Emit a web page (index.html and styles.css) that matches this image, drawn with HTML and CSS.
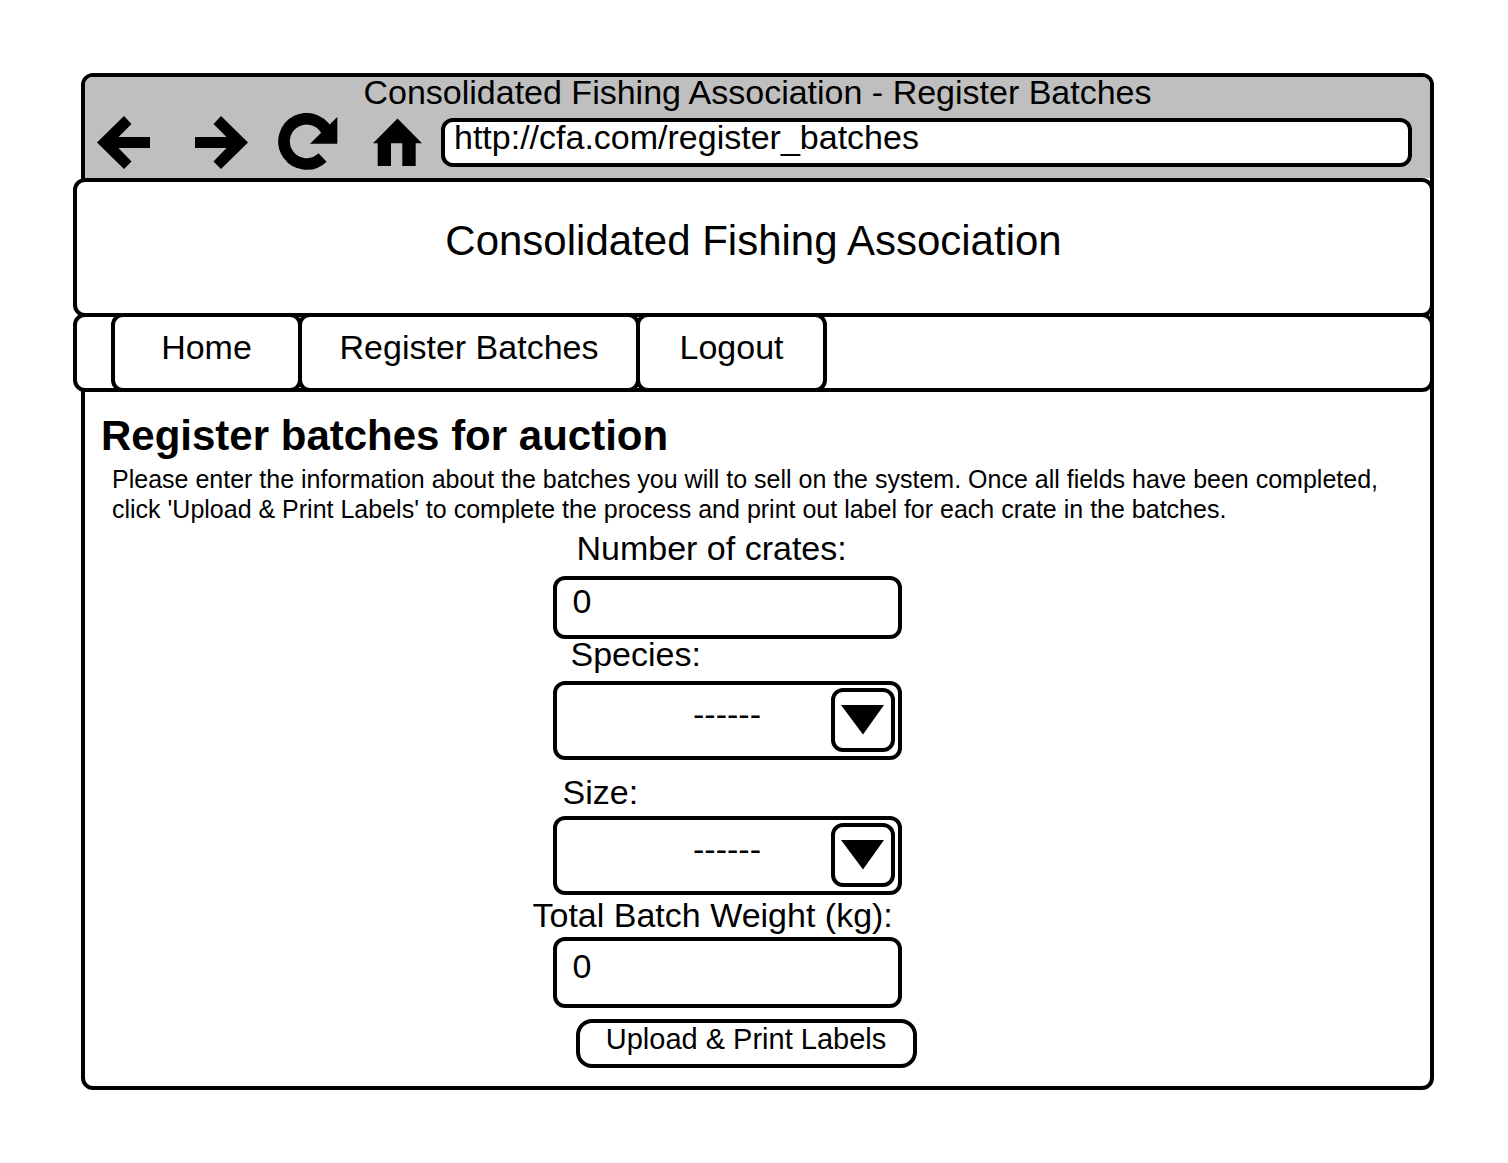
FILE: index.html
```html
<!DOCTYPE html>
<html lang="en">
<head>
<meta charset="utf-8">
<meta name="viewport" content="width=device-width, initial-scale=1">
<title>Consolidated Fishing Association - Register Batches</title>
<link rel="stylesheet" href="styles.css">
</head>
<body>
<div class="window">
  <div class="chrome">
    <div class="chrome-title">Consolidated Fishing Association - Register Batches</div>
    <div class="toolbar">
      <button class="tool tool-back" type="button" aria-label="Back">
        <svg width="53" height="53" viewBox="0 0 53 53"><path d="M0 26.500 27 0l7.500 8L21.500 21H53v11H21.500l13 13.500L27 53z"/></svg>
      </button>
      <button class="tool tool-forward" type="button" aria-label="Forward">
        <svg width="53" height="53" viewBox="0 0 53 53"><path d="M53 26.500 26 0l-7.500 8 13 13H0v11h31.500l-13 13.500L26 53z"/></svg>
      </button>
      <button class="tool tool-reload" type="button" aria-label="Reload">
        <svg width="60" height="58" viewBox="0 0 60 58"><path d="M50.300 22A22.600 22.600 0 1 0 44.500 44.500" fill="none" stroke="#000" stroke-width="11.600"/><path d="M59.300 4v26.700H32z"/></svg>
      </button>
      <button class="tool tool-home" type="button" aria-label="Home page">
        <svg width="50" height="49" viewBox="0 0 50 49"><path d="M24.500.500 49 25.300h-6.300V48H29.300V25.300H18V48H4.700V25.300H0z"/></svg>
      </button>
      <input class="address" type="text" aria-label="Address" value="http://cfa.com/register_batches">
    </div>
  </div>

  <header class="banner">Consolidated Fishing Association</header>
  <nav class="tabs">
    <a class="tab" href="#home">Home</a>
    <a class="tab tab-wide" href="#register">Register Batches</a>
    <a class="tab" href="#logout">Logout</a>
  </nav>

  <main class="content">
    <h1>Register batches for auction</h1>
    <p class="intro">Please enter the information about the batches you will to sell on the system. Once all fields have been completed, click 'Upload &amp; Print Labels' to complete the process and print out label for each crate in the batches.</p>

    <form class="form">
      <label class="label-crates" for="crates">Number of crates:</label>
      <input class="field" id="crates" type="text" inputmode="numeric" value="0">

      <label class="label-species" for="species">Species:</label>
      <div class="dropdown">
        <select id="species"><option>------</option></select>
        <span class="arrow"><svg width="44" height="30" viewBox="0 0 44 30"><path d="M0 0h43L22 29.500z"/></svg></span>
      </div>

      <label class="label-size" for="size">Size:</label>
      <div class="dropdown">
        <select id="size"><option>------</option></select>
        <span class="arrow"><svg width="44" height="30" viewBox="0 0 44 30"><path d="M0 0h43L22 29.500z"/></svg></span>
      </div>

      <label class="label-weight" for="weight">Total Batch Weight (kg):</label>
      <input class="field field-tall" id="weight" type="text" inputmode="decimal" value="0">

      <button class="submit" type="button">Upload &amp; Print Labels</button>
    </form>
  </main>
</div>
</body>
</html>
```
FILE: styles.css
```css
* {
  box-sizing: border-box;
}

body {
  margin: 0;
  padding: 73px 74px 74px 81px;
  background: #fff;
  color: #000;
  font: 34px/36px "Liberation Sans", Arial, sans-serif;
}

button,
input,
select {
  margin: 0;
  color: inherit;
  font: inherit;
}

svg {
  display: block;
}

.window {
  border: 4px solid #000;
  border-radius: 12px;
}

/* Browser bar */
.chrome {
  padding-bottom: 11px;
  border-radius: 8px 8px 0 0;
  background: #bfbfbf;
}

.chrome-title {
  line-height: 30px;
  text-align: center;
}

.toolbar {
  display: flex;
  align-items: center;
  padding: 11px 18px 0 12px;
}

.tool {
  flex: none;
  padding: 0;
  border: 0;
  background: none;
}

.tool-back,
.tool-forward {
  margin-top: -2px;
  margin-bottom: -2px;
}

.tool-back {
  margin-right: 45px;
}

.tool-forward {
  margin-right: 30px;
}

.tool-reload {
  height: 58px;
  margin: -5px 35px -4px 0;
}

.tool-home {
  margin-right: 18px;
}

.address {
  flex: 1;
  min-width: 0;
  height: 49px;
  padding: 0 9px 10px;
  border: 4px solid #000;
  border-radius: 12px;
  background: #fff;
}

/* Site header and tabs run past the window's left edge */
.banner,
.tabs {
  margin: 0 -4px 0 -12px;
  border: 4px solid #000;
  border-radius: 12px;
  background: #fff;
}

.banner {
  padding: 35px 0 48px;
  font-size: 42px;
  line-height: 48px;
  text-align: center;
}

.tabs {
  display: flex;
  margin-top: -4px;
  padding-left: 34px;
}

.tab {
  width: 191px;
  height: 79px;
  margin: -4px -4px -4px 0;
  padding-top: 12px;
  border: 4px solid #000;
  border-radius: 12px;
  color: inherit;
  text-align: center;
  text-decoration: none;
}

.tab-wide {
  width: 342px;
}

/* Page */
.content {
  padding: 20px 16px 18px;
}

h1 {
  margin: 0 0 4px;
  font-size: 42px;
  line-height: 48px;
}

.intro {
  margin: 0 0 6px;
  padding: 0 12px 0 11px;
  font-size: 25px;
  line-height: 30px;
}

/* The fields sit a little left of the window's centre */
.form {
  display: flex;
  flex-direction: column;
  align-items: flex-start;
  width: 450px;
  margin: 0 auto;
  padding-right: 66px;
}

.label-crates {
  margin-bottom: 10px;
  padding-left: 44px;
}

.label-species {
  margin: -3px 0 9px;
  padding-left: 38px;
}

.label-size {
  margin: 14px 0 6px;
  padding-left: 30px;
}

.label-weight {
  margin: 2px 0 4px;
  white-space: nowrap;
}

.field,
.dropdown {
  width: 349px;
  margin-left: 20px;
}

.field,
.dropdown select {
  border: 4px solid #000;
  border-radius: 12px;
  background: #fff;
}

.field {
  height: 63px;
  padding: 0 16px 12px;
}

.field-tall {
  height: 71px;
}

.dropdown {
  position: relative;
}

.dropdown select {
  display: block;
  width: 100%;
  height: 79px;
  padding: 0 0 14px;
  appearance: none;
  text-align: center;
  text-align-last: center;
}

.arrow {
  position: absolute;
  top: 7px;
  right: 7px;
  display: grid;
  place-items: center;
  width: 64px;
  height: 64px;
  border: 4px solid #000;
  border-radius: 12px;
  pointer-events: none;
}

.submit {
  width: 341px;
  height: 49px;
  margin: 11px 0 0 43px;
  padding: 0 0 10px;
  border: 4px solid #000;
  border-radius: 16px;
  background: #fff;
  font-size: 29px;
  line-height: 30px;
  white-space: nowrap;
}
```
